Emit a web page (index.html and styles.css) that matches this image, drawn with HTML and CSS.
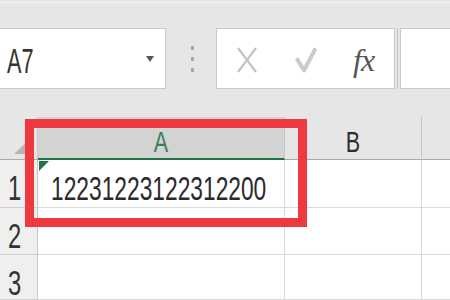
FILE: index.html
```html
<!DOCTYPE html>
<html>
<head>
<meta charset="utf-8">
<link rel="stylesheet" href="styles.css">
</head>
<body>
<div class="app">
  <div class="topline"></div>
  <div class="fbar">
    <div class="namebox">
      <span class="cond name">A7</span>
      <span class="caret"></span>
    </div>
    <div class="dots"><i></i><i></i><i></i></div>
    <div class="fbox">
      <svg class="ic-x" width="20" height="26" viewBox="0 0 20 26"><path d="M1 1 L19 25 M19 1 L1 25" stroke="#c4c4c4" stroke-width="2.2" fill="none"/></svg>
      <svg class="ic-check" width="22" height="26" viewBox="0 0 22 26"><path d="M1.5 11 L9 23.5 L20.5 1.5" stroke="#cbcbcb" stroke-width="4" fill="none" stroke-linejoin="round"/></svg>
      <span class="fx">fx</span>
    </div>
    <div class="sep"></div>
    <div class="fbox2"></div>
  </div>
  <div class="grid">
    <div class="corner"><span class="tri"></span></div>
    <div class="colhead active"><span class="cond hdr">A</span></div>
    <div class="colhead"><span class="cond hdr dark">B</span></div>
    <div class="colhead last"></div>

    <div class="rowhead"><span class="cond rnum">1</span></div>
    <div class="cell a1"><span class="flag"></span><span class="cond val">12231223122312200</span></div>
    <div class="cell"></div>
    <div class="cell last"></div>

    <div class="rowhead"><span class="cond rnum">2</span></div>
    <div class="cell"></div>
    <div class="cell"></div>
    <div class="cell last"></div>

    <div class="rowhead"><span class="cond rnum">3</span></div>
    <div class="cell"></div>
    <div class="cell"></div>
    <div class="cell last"></div>
  </div>
  <div class="highlight"></div>
</div>
</body>
</html>
```
FILE: styles.css
```css
* { box-sizing: border-box; }
html, body { margin: 0; padding: 0; }
body {
  width: 450px;
  height: 300px;
  overflow: hidden;
  background: #e6e6e6;
  font-family: "Liberation Sans", Arial, sans-serif;
}
.app {
  position: relative;
  width: 450px;
  height: 300px;
  overflow: hidden;
}
.topline {
  margin-top: 2px;
  height: 1px;
  background: #f3f3f3;
  margin-bottom: 25px;
}
.fbar {
  display: flex;
  height: 61px;
  margin-bottom: 28px;
}
.namebox {
  width: 166px;
  background: #fff;
  border: 1px solid #c9c9c9;
  border-left: none;
  display: flex;
  align-items: center;
  justify-content: space-between;
  padding-left: 7px;
  padding-right: 11px;
}
.cond {
  display: inline-block;
  transform-origin: left center;
}
.name {
  font-size: 35px;
  line-height: 35px;
  color: #333;
  transform: scaleX(0.62);
  margin-top: 4px;
}
.caret {
  width: 0;
  height: 0;
  border-left: 4px solid transparent;
  border-right: 4px solid transparent;
  border-top: 6px solid #555;
  margin-top: 1px;
}
.dots {
  width: 50px;
  display: flex;
  flex-direction: column;
  align-items: center;
  justify-content: center;
  gap: 7px;
  padding-left: 2px;
}
.dots i {
  display: block;
  width: 3px;
  height: 4px;
  background: #a8a8a8;
}
.fbox {
  width: 179px;
  background: #fff;
  border: 1px solid #c9c9c9;
  display: flex;
  align-items: center;
  padding-left: 20px;
}
.ic-x { margin-top: 2px; }
.ic-check { margin-left: 38px; margin-top: 3px; }
.fx {
  margin-left: 36px;
  font-family: "Liberation Serif", "Times New Roman", serif;
  font-style: italic;
  font-size: 32px;
  line-height: 32px;
  color: #555;
  letter-spacing: -1px;
  margin-top: 2px;
}
.sep {
  width: 5px;
  display: flex;
  justify-content: center;
}
.sep::before {
  content: "";
  width: 1px;
  background: #c4c4c4;
}
.fbox2 {
  flex: 1;
  background: #fff;
  border: 1px solid #c9c9c9;
  border-right: none;
}
.grid {
  display: grid;
  grid-template-columns: 38px 247px 137px 28px;
  grid-template-rows: 43px 48px 47px 45px;
}
.corner {
  position: relative;
  background: #e6e6e6;
  border-right: 1px solid #c6c6c6;
  border-bottom: 1px solid #aaa;
}
.tri {
  position: absolute;
  right: 4px;
  bottom: 5px;
  width: 0;
  height: 0;
  border-left: 19px solid transparent;
  border-bottom: 18px solid #b5b5b5;
}
.colhead {
  background: #e6e6e6;
  border-right: 1px solid #c6c6c6;
  border-bottom: 1px solid #a9a9a9;
  text-align: center;
  padding-top: 10px;
}
.colhead.last { border-right: none; }
.colhead.active {
  background: #d3d3d3;
  border-bottom: 2px solid #217346;
}
.hdr {
  font-size: 30px;
  line-height: 30px;
  color: #3f7d57;
  transform: scaleX(0.72);
  transform-origin: center center;
}
.hdr.dark { color: #2e2e2e; }
.rowhead {
  background: #efefef;
  border-right: 1px solid #c6c6c6;
  border-bottom: 1px solid #d0d0d0;
  padding-left: 8px;
  padding-top: 13px;
}
.rnum {
  font-size: 35px;
  line-height: 30px;
  color: #333;
  transform: scaleX(0.68);
}
.cell {
  position: relative;
  background: #fff;
  border-right: 1px solid #dadada;
  border-bottom: 1px solid #dadada;
}
.cell.last { border-right: none; }
.a1 {
  padding-left: 13px;
  padding-top: 12px;
  white-space: nowrap;
}
.flag {
  position: absolute;
  left: 1px;
  top: 1px;
  width: 0;
  height: 0;
  border-top: 10px solid #217346;
  border-right: 10px solid transparent;
}
.val {
  font-size: 33px;
  line-height: 33px;
  color: #2b2b2b;
  transform: scaleX(0.69);
}
.highlight {
  position: absolute;
  left: 25px;
  top: 119px;
  width: 282px;
  height: 108px;
  border: 9px solid #ee3a3f;
}
```
